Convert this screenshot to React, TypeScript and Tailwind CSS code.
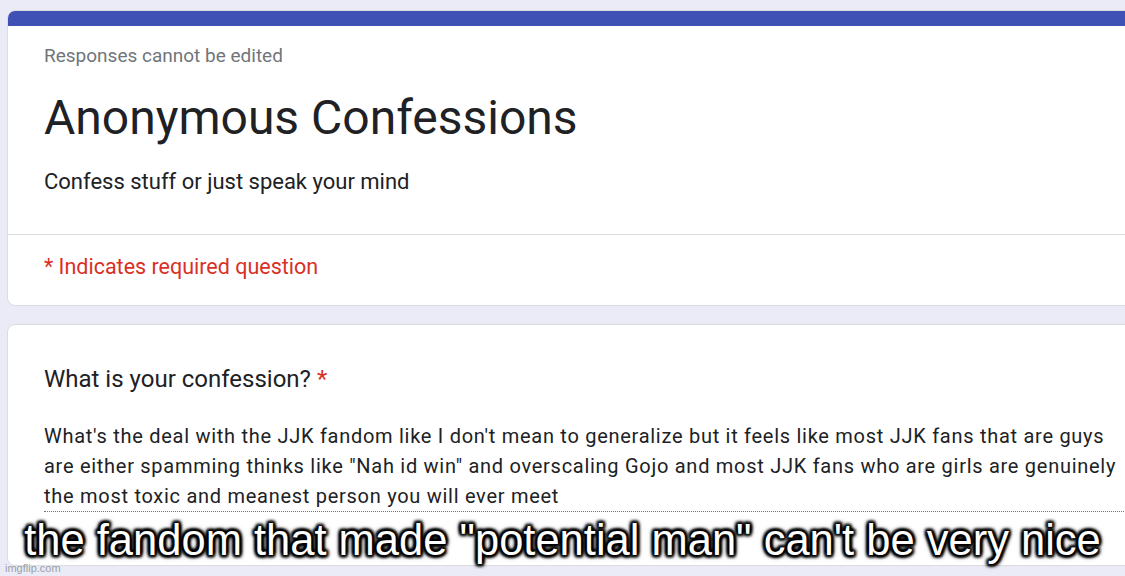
import React from 'react';

const answer =
  'What\'s the deal with the JJK fandom like I don\'t mean to generalize but it feels like most JJK fans that are guys are either spamming thinks like "Nah id win" and overscaling Gojo and most JJK fans who are girls are genuinely the most toxic and meanest person you will ever meet';

const outline =
  '2px 2px 3px #000, -2px -2px 3px #000, 2px -2px 3px #000, -2px 2px 3px #000, 0 2px 3px #000, 0 -2px 3px #000, 2px 0 3px #000, -2px 0 3px #000, 0 0 6px #000';

export default function App() {
  return (
    <div className="relative w-[1125px] h-[576px] overflow-hidden bg-[#eaebf6] font-['Roboto',sans-serif]">
      <div className="flex flex-col gap-[18px] pt-[10px] pl-[7px]">
        {/* header card */}
        <div className="w-[1160px] rounded-lg bg-white border border-[#dadce0] overflow-hidden">
          <div className="h-[15px] bg-[#3f51b5]" />
          <div className="px-[36px] pt-[18px] pb-[37px] border-b border-[#dadce0]">
            <div className="text-[19px] leading-[24px] text-[#70757a]">Responses cannot be edited</div>
            <h1 className="mt-[22px] text-[48px] leading-[56px] text-[#202124]">Anonymous Confessions</h1>
            <p className="mt-[21px] text-[22px] leading-[30px] text-[#202124]">Confess stuff or just speak your mind</p>
          </div>
          <div className="px-[36px] pt-[18px] pb-[24px] text-[21.5px] leading-[28px] text-[#d93025]">
            * Indicates required question
          </div>
        </div>

        {/* question card */}
        <div className="w-[1160px] h-[242px] rounded-lg bg-white border border-[#dadce0] px-[36px] pt-[39px]">
          <div className="text-[24px] leading-[30px] text-[#202124]">
            What is your confession? <span className="text-[#d93025]">*</span>
          </div>
          <div className="mt-[27px] border-b border-dotted border-[#70757a]">
            <p className="text-[20px] leading-[30px] tracking-[0.72px] text-[#202124]">{answer}</p>
          </div>
        </div>
      </div>

      {/* meme caption */}
      <div
        className="absolute left-0 right-0 top-[512px] text-center text-white text-[43.5px] leading-[56px] font-['Liberation_Sans',Arial,sans-serif]"
        style={{ textShadow: outline }}
      >
        the fandom that made "potential man" can't be very nice
      </div>
      <div className="absolute left-[5px] bottom-[1px] text-[11px] leading-[14px] text-[#9aa0a6] font-['Liberation_Sans',Arial,sans-serif]">
        imgflip.com
      </div>
    </div>
  );
}
